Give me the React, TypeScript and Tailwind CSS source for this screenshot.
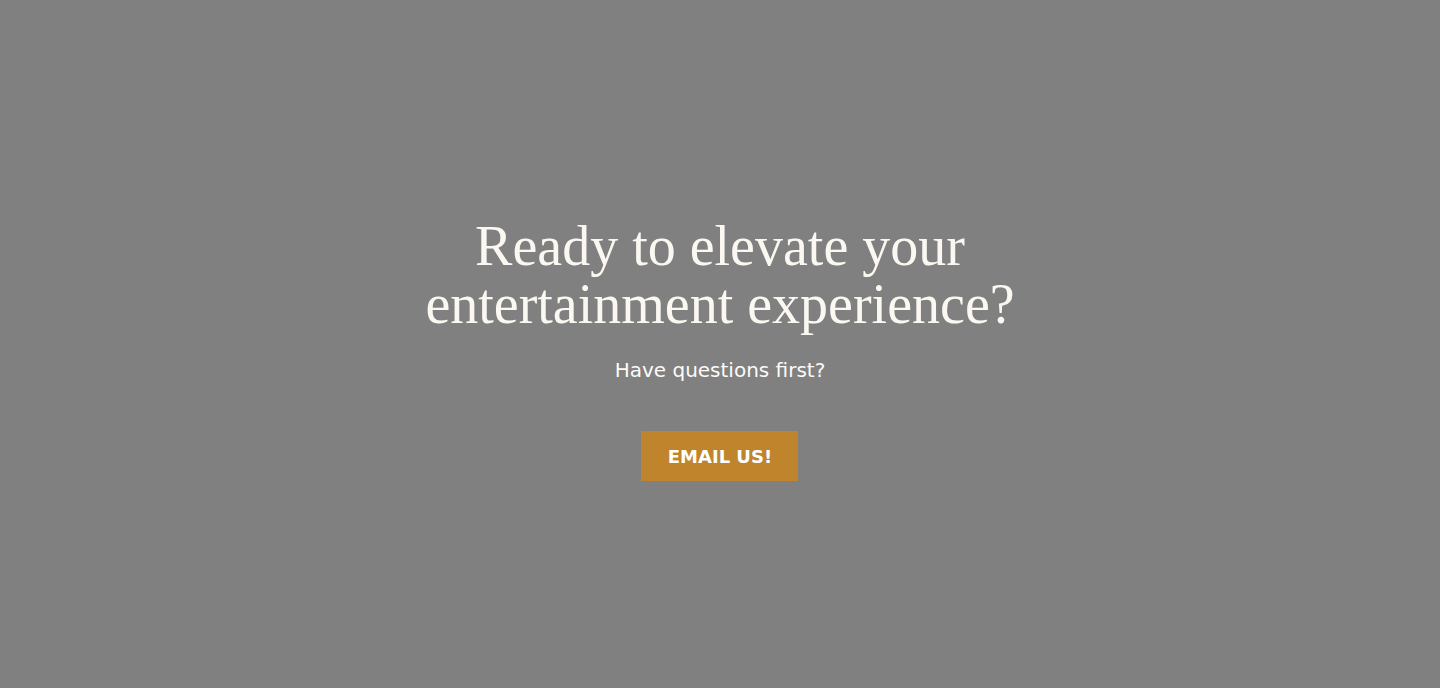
const App = () => {
  return (
    <div className="flex min-h-screen items-center justify-center bg-[#808080] pt-[10px]">
      <div className="flex flex-col items-center text-center">
        <h1 className="font-['Liberation_Serif',serif] text-[56px] leading-[58px] text-[#fbf8f1]">
          Ready to elevate your
          <br />
          entertainment experience?
        </h1>
        <p className="mt-[23px] font-['DejaVu_Sans',sans-serif] text-[20px] leading-[28px] text-[#fcfbf8]">
          Have questions first?
        </p>
        <a
          href="#"
          className="mt-[47px] flex h-[50px] w-[157px] items-center justify-center bg-[#c0842c] font-['DejaVu_Sans',sans-serif] text-[18px] font-bold text-white"
        >
          EMAIL US!
        </a>
      </div>
    </div>
  );
};

export default App;
